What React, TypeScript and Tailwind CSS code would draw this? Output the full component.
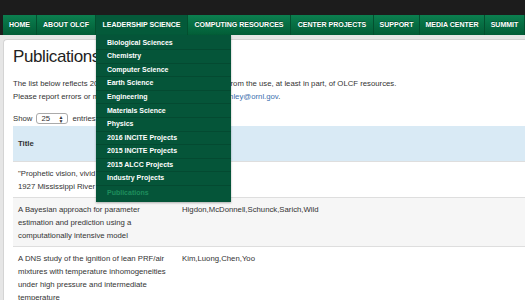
const navItems = [
  { label: "HOME", w: "w-[34px]" },
  { label: "ABOUT OLCF", w: "w-[59px]" },
  { label: "LEADERSHIP SCIENCE", w: "w-[92px]" },
  { label: "COMPUTING RESOURCES", w: "w-[103px]" },
  { label: "CENTER PROJECTS", w: "w-[83px]" },
  { label: "SUPPORT", w: "w-[46px]" },
  { label: "MEDIA CENTER", w: "w-[65px]" },
  { label: "SUMMIT", w: "w-[40px]" },
];

const scienceMenu = [
  "Biological Sciences",
  "Chemistry",
  "Computer Science",
  "Earth Science",
  "Engineering",
  "Materials Science",
  "Physics",
  "2016 INCITE Projects",
  "2015 INCITE Projects",
  "2015 ALCC Projects",
  "Industry Projects",
  "Publications",
];

type Pub = { title: string[]; authors: string };

const pubs: Pub[] = [
  {
    title: ['"Prophetic vision, vivid imagination": The', "1927 Mississippi River flood"],
    authors: "Smith,Jones",
  },
  {
    title: [
      "A Bayesian approach for parameter",
      "estimation and prediction using a",
      "computationally intensive model",
    ],
    authors: "Higdon,McDonnell,Schunck,Sarich,Wild",
  },
  {
    title: [
      "A DNS study of the ignition of lean PRF/air",
      "mixtures with temperature inhomogeneities",
      "under high pressure and intermediate",
      "temperature",
    ],
    authors: "Kim,Luong,Chen,Yoo",
  },
];

export default function App() {
  return (
    <div
      className="relative w-[525px] h-[300px] overflow-hidden bg-[#e6e6e6] text-[#333]"
      style={{ fontFamily: '"Liberation Sans", Arial, sans-serif' }}
    >
      {/* top strip */}
      <div className="h-[15px] bg-[#1c1c1c]" />

      {/* main nav */}
      <div className="flex h-[20px] bg-[#1c1c1c] pl-[3px]">
        <div className="flex flex-1 bg-gradient-to-b from-[#0b7f4f] to-[#035d37]">
          {navItems.map((item) => (
            <div
              key={item.label}
              className={
                item.label === "LEADERSHIP SCIENCE"
                  ? `${item.w} shrink-0 flex items-center justify-center bg-[#045a3a] border-r border-[#03502f] text-[7px] font-bold text-white whitespace-nowrap`
                  : `${item.w} shrink-0 flex items-center justify-center border-r border-[#03502f] text-[7px] font-bold text-white whitespace-nowrap [text-shadow:0_-1px_0_rgba(0,0,0,0.35)]`
              }
            >
              {item.label}
            </div>
          ))}
        </div>
      </div>

      {/* page card */}
      <div className="ml-[3px] mt-[4px] w-[560px] h-[300px] bg-white border-t border-l border-[#d4d4d4] rounded-tl-[4px] pl-[9px] pt-[5px]">
        <h1 className="text-[17px] leading-[24px] text-[#222] tracking-[-0.4px]">Publications</h1>

        <div className="mt-[8px] text-[7.75px] leading-[13px]">
          <p>
            The list below reflects 2016 publications by our users resulting from the use, at least in part, of OLCF resources.
          </p>
          <p>
            Please report errors or missing publications to OLCF staff at{" "}
            <span className="text-[#3d6fae]">ashley@ornl.gov</span>.
          </p>
        </div>

        <div className="mt-[10px] flex items-center gap-[4px] text-[7.75px]">
          <span>Show</span>
          <div className="flex items-center justify-between w-[32px] h-[11px] border border-[#aaa] rounded-[3px] px-[4px] bg-white">
            <span className="text-[7.75px]">25</span>
            <span className="text-[5px] leading-[4px] flex flex-col">
              <span>▲</span>
              <span>▼</span>
            </span>
          </div>
          <span>entries</span>
        </div>

        <table className="mt-[1px] w-[700px] table-fixed border-collapse text-[7.75px] leading-[13px]">
          <thead>
            <tr className="bg-[#d9eaf5] h-[36px]">
              <th className="w-[164px] px-[5px] text-left font-bold">Title</th>
              <th className="w-[360px] px-[5px] text-left font-bold">Authors</th>
              <th className="px-[5px]" />
            </tr>
          </thead>
          <tbody>
            {pubs.map((p, i) => (
              <tr
                key={i}
                className={i % 2 === 1 ? "bg-[#f6f6f6] border-t border-[#dedede]" : "bg-white border-t border-[#dedede]"}
              >
                <td className="px-[5px] py-[4.5px] align-top">
                  {p.title.map((line) => (
                    <div key={line} className="whitespace-nowrap">
                      {line}
                    </div>
                  ))}
                </td>
                <td className="px-[5px] py-[4.5px] align-top whitespace-nowrap">{p.authors}</td>
                <td className="px-[5px] py-[4.5px] align-top" />
              </tr>
            ))}
          </tbody>
        </table>
      </div>

      {/* dropdown menu */}
      <div className="absolute left-[96px] top-[35px] w-[135px] bg-[#055539] pt-[1.5px] pb-[2px] shadow-[0_1px_2px_rgba(0,0,0,0.3)]">
        {scienceMenu.map((item) => (
          <div
            key={item}
            className={
              item === "Publications"
                ? "h-[13.6px] flex items-center pl-[11px] text-[7px] font-bold text-[#1e8d5c]"
                : "h-[13.6px] flex items-center pl-[11px] text-[7px] font-bold text-white border-b border-[#044a31]"
            }
          >
            {item}
          </div>
        ))}
      </div>
    </div>
  );
}
